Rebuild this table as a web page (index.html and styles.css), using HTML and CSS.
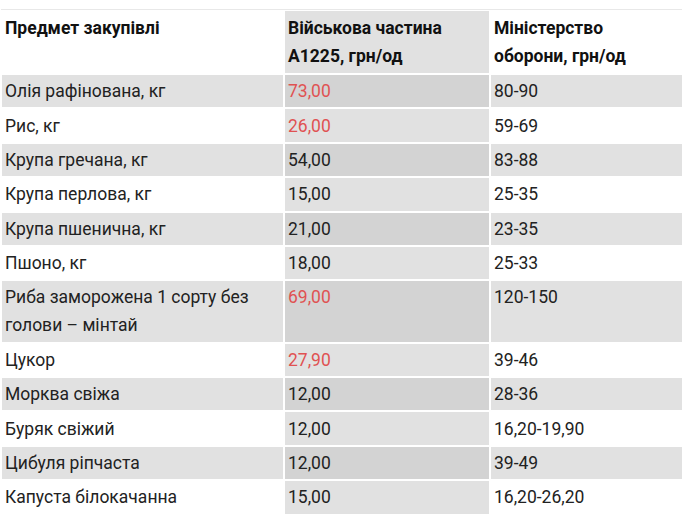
FILE: index.html
```html
<!DOCTYPE html>
<html lang="uk">
<head>
<meta charset="utf-8">
<link rel="stylesheet" href="styles.css">
</head>
<body>
<div class="wrap">
<table class="prices">
  <colgroup>
    <col class="c1"><col class="c2"><col class="c3">
  </colgroup>
  <thead>
    <tr><th>Предмет закупівлі</th><th class="mil">Військова частина А1225, грн/од</th><th>Міністерство оборони, грн/од</th></tr>
  </thead>
  <tbody>
    <tr><td>Олія рафінована, кг</td><td class="mil red">73,00</td><td>80-90</td></tr>
    <tr><td>Рис, кг</td><td class="mil red">26,00</td><td>59-69</td></tr>
    <tr><td>Крупа гречана, кг</td><td class="mil">54,00</td><td>83-88</td></tr>
    <tr><td>Крупа перлова, кг</td><td class="mil">15,00</td><td>25-35</td></tr>
    <tr><td>Крупа пшенична, кг</td><td class="mil">21,00</td><td>23-35</td></tr>
    <tr><td>Пшоно, кг</td><td class="mil">18,00</td><td>25-33</td></tr>
    <tr><td>Риба заморожена 1 сорту без голови – мінтай</td><td class="mil red">69,00</td><td>120-150</td></tr>
    <tr><td>Цукор</td><td class="mil red">27,90</td><td>39-46</td></tr>
    <tr><td>Морква свіжа</td><td class="mil">12,00</td><td>28-36</td></tr>
    <tr><td>Буряк свіжий</td><td class="mil">12,00</td><td>16,20-19,90</td></tr>
    <tr><td>Цибуля ріпчаста</td><td class="mil">12,00</td><td>39-49</td></tr>
    <tr><td>Капуста білокачанна</td><td class="mil">15,00</td><td>16,20-26,20</td></tr>
  </tbody>
</table>
</div>
</body>
</html>
```
FILE: styles.css
```css
html, body {
  margin: 0;
  padding: 0;
  background: #ffffff;
}
body {
  font-family: Roboto, "Noto Sans", Arial, sans-serif;
  font-size: 17.5px;
  color: #222222;
}
.wrap {
  margin: 9px 0 0 1px;
  width: 681px;
  border-top: 1px solid #e8e8e8;
}
.prices {
  margin-left: -1px;
  margin-top: -1px;
  width: 684px;
  table-layout: fixed;
  border-collapse: separate;
  border-spacing: 2px;
  font-size: 17.5px;
}
.c1 { width: 281px; }
.c2 { width: 204px; }
.c3 { width: 191px; }
.prices th,
.prices td {
  text-align: left;
  vertical-align: top;
  line-height: 28px;
  padding: 2.2px 3px;
}
.prices th {
  font-weight: 700;
  color: #111111;
  padding-top: 3px;
  padding-bottom: 3px;
}
.prices th.mil {
  background: #e1e1e1;
}
.prices tbody tr:nth-child(odd) td {
  background: #e1e1e1;
}
.prices tbody td.mil {
  background: #e1e1e1;
}
.prices tbody tr:nth-child(odd) td.mil {
  background: #d3d3d3;
}
.prices td.red {
  color: #e05252;
}
```
